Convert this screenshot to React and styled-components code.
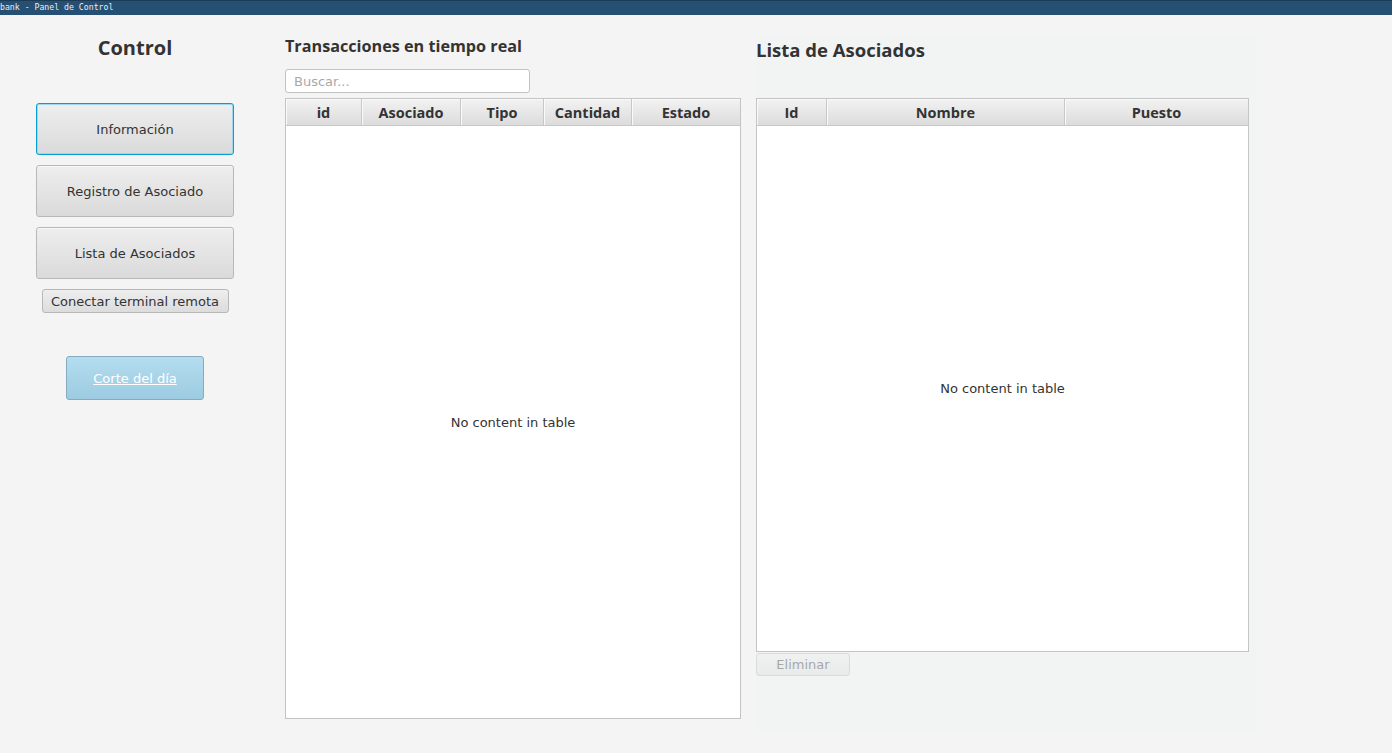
import React from 'react'
import styled, { createGlobalStyle } from 'styled-components'

const GlobalStyle = createGlobalStyle`
    html, body {
        margin: 0;
        padding: 0;
        background: #f4f4f4;
    }
    #root {
        height: 753px;
        overflow: hidden;
    }
`

const Window = styled.div`
    display: flex;
    flex-direction: column;
    height: 753px;
    background: #f4f4f4;
    font-family: "DejaVu Sans", "Open Sans", sans-serif;
    color: #333;
`
const TitleBar = styled.div`
    height: 15px;
    background: #265073;
    border-top: 1px solid #1b3a54;
    box-sizing: border-box;
    color: #e8eef3;
    font-family: "DejaVu Sans Mono", monospace;
    font-size: 8.2px;
    line-height: 13px;
    white-space: nowrap;
`
const Body = styled.div`
    display: flex;
    flex: 1;
`
const Sidebar = styled.div`
    width: 270px;
    display: flex;
    flex-direction: column;
    align-items: center;
    padding-top: 21px;
`
const SideTitle = styled.h2`
    margin: 0 0 43px;
    font-family: "Open Sans", sans-serif;
    font-size: 20px;
    line-height: 24px;
    font-weight: 700;
    color: #333;
`
const NavButton = styled.button`
    width: 198px;
    height: 52px;
    margin-bottom: 10px;
    box-sizing: border-box;
    font-family: inherit;
    font-size: 13px;
    color: #333;
    border-radius: 3px;
    background: linear-gradient(#eeeeee, #dadada);
    border: 1px solid ${p => (p.focused ? '#039ed3' : '#b8b8b8')};
    box-shadow: ${p => (p.focused ? 'inset 0 0 0 1px #9fd8ee' : 'inset 0 1px 0 #f8f8f8')};
`
const SmallButton = styled.button`
    width: 187px;
    height: 24px;
    box-sizing: border-box;
    font-family: inherit;
    font-size: 13px;
    color: #333;
    padding: 0;
    border-radius: 3px;
    background: linear-gradient(#eeeeee, #dcdcdc);
    border: 1px solid #b8b8b8;
`
const CutButton = styled.button`
    width: 138px;
    height: 44px;
    margin-top: 43px;
    box-sizing: border-box;
    font-family: inherit;
    font-size: 13px;
    color: #ffffff;
    text-decoration: underline;
    border-radius: 3px;
    background: linear-gradient(#b4ddef, #9ccbe1);
    border: 1px solid #84abc2;
`
const Middle = styled.div`
    width: 456px;
    margin-left: 15px;
    display: flex;
    flex-direction: column;
    padding-top: 21px;
`
const SectionTitle = styled.h3`
    margin: 0;
    font-family: "Open Sans", sans-serif;
    font-size: ${p => p.size || 16.2}px;
    line-height: ${p => p.lh || 20}px;
    font-weight: 700;
    color: #333;
`
const Search = styled.input`
    width: 245px;
    height: 24px;
    margin: 13px 0 5px;
    box-sizing: border-box;
    border: 1px solid #c2c2c2;
    border-radius: 3px;
    padding: 0 8px;
    font-family: inherit;
    font-size: 13px;
    color: #333;
    background: #fff;
    &::placeholder {
        color: #a8a8a8;
    }
`
const Table = styled.div`
    height: ${p => p.h}px;
    box-sizing: border-box;
    border: 1px solid #c4c4c4;
    background: #fff;
    display: flex;
    flex-direction: column;
`
const HeaderRow = styled.div`
    display: flex;
    height: 26px;
    border-bottom: 1px solid #c8c8c8;
`
const HeaderCell = styled.div`
    width: ${p => p.w}px;
    flex: ${p => (p.grow ? 1 : 'none')};
    box-sizing: border-box;
    display: flex;
    align-items: center;
    justify-content: center;
    font-family: "Open Sans", sans-serif;
    font-size: 14.5px;
    font-weight: 700;
    color: #333;
    background: linear-gradient(#f2f2f2, #dcdcdc);
    border-right: 1px solid #c8c8c8;
    box-shadow: inset 1px 1px 0 #fafafa;
    &:last-child {
        border-right: none;
    }
`
const Empty = styled.div`
    flex: 1;
    display: flex;
    align-items: center;
    justify-content: center;
    font-size: 13px;
    color: #333;
`
const RightPanel = styled.div`
    width: 501px;
    height: 695px;
    margin-left: 15px;
    margin-top: 21px;
    padding-right: 8px;
    box-sizing: border-box;
    background: #f2f4f4;
    display: flex;
    flex-direction: column;
`
const RightTitle = styled(SectionTitle)`
    margin-bottom: 34px;
`
const DeleteButton = styled.button`
    width: 94px;
    height: 23px;
    margin-top: 1px;
    box-sizing: border-box;
    font-family: inherit;
    font-size: 13px;
    color: #333;
    padding: 0;
    border-radius: 3px;
    background: linear-gradient(#eeeeee, #dcdcdc);
    border: 1px solid #b8b8b8;
    opacity: 0.4;
`

const transColumns = [
    { label: 'id', w: 76 },
    { label: 'Asociado', w: 99 },
    { label: 'Tipo', w: 83 },
    { label: 'Cantidad', w: 88 },
    { label: 'Estado', grow: true },
]

const memberColumns = [
    { label: 'Id', w: 70 },
    { label: 'Nombre', w: 238 },
    { label: 'Puesto', grow: true },
]

const DataTable = ({ columns, height }) => (
    <Table h={height}>
        <HeaderRow>
            {columns.map(col => (
                <HeaderCell key={col.label} w={col.w} grow={col.grow}>
                    {col.label}
                </HeaderCell>
            ))}
        </HeaderRow>
        <Empty>No content in table</Empty>
    </Table>
)

const App = () => {
    return (
        <Window>
            <GlobalStyle />
            <TitleBar>bank - Panel de Control</TitleBar>
            <Body>
                <Sidebar>
                    <SideTitle>Control</SideTitle>
                    <NavButton focused>Información</NavButton>
                    <NavButton>Registro de Asociado</NavButton>
                    <NavButton>Lista de Asociados</NavButton>
                    <SmallButton>Conectar terminal remota</SmallButton>
                    <CutButton>Corte del día</CutButton>
                </Sidebar>
                <Middle>
                    <SectionTitle>Transacciones en tiempo real</SectionTitle>
                    <Search placeholder="Buscar..." />
                    <DataTable columns={transColumns} height={621} />
                </Middle>
                <RightPanel>
                    <RightTitle size={18.5} lh={28}>Lista de Asociados</RightTitle>
                    <DataTable columns={memberColumns} height={554} />
                    <DeleteButton disabled>Eliminar</DeleteButton>
                </RightPanel>
            </Body>
        </Window>
    )
}

export default App
